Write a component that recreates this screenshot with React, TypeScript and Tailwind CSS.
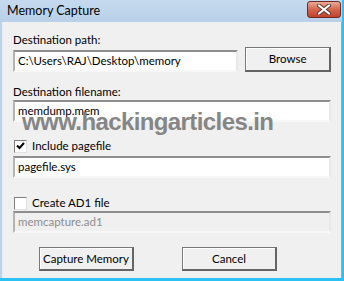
import * as React from "react";

function TextBox({ value, disabled = false, className = "" }: { value: string; disabled?: boolean; className?: string }) {
  return (
    <div
      className={`h-[22px] flex items-center pl-[3px] whitespace-nowrap border-2 border-t-[#8e8e8e] border-l-[#b4b4b4] border-b-[#f7f7f7] border-r-[#e8e8e8] ${
        disabled ? "bg-[#f0f0f0] text-[#8d8d8d]" : "bg-white text-black"
      } ${className}`}
    >
      {value}
    </div>
  );
}

function Button({ label, className = "" }: { label: string; className?: string }) {
  return (
    <div
      className={`h-[24px] flex items-center justify-center whitespace-nowrap bg-[#f0f0f0] border border-[#787878] border-r-2 border-b-2 border-r-[#646464] border-b-[#646464] shadow-[inset_1px_1px_0_#ffffff] text-black ${className}`}
    >
      {label}
    </div>
  );
}

function CheckBox({ checked, label }: { checked: boolean; label: string }) {
  return (
    <div className="h-[16px] flex items-center">
      <div className="ml-[1px] w-[13px] h-[13px] bg-white border border-t-[#7e7e7e] border-l-[#7e7e7e] border-b-[#e2e2e2] border-r-[#e2e2e2] flex items-center justify-center">
        {checked && (
          <svg width="9" height="8" viewBox="0 0 9 8">
            <path d="M1 3.5 L3.5 6 L8 1" fill="none" stroke="#000" strokeWidth="2" />
          </svg>
        )}
      </div>
      <span className="ml-[5px]">{label}</span>
    </div>
  );
}

export default function App() {
  return (
    <div className="relative w-[344px] h-[281px] flex flex-col bg-[#bdd3ea] border-r-2 border-b-[3px] border-[#2cc1f3] font-['Lato',sans-serif] text-[11.5px] leading-[16px] text-black">
      {/* title bar */}
      <div className="h-[22px] flex items-start bg-gradient-to-b from-[#c5daef] to-[#b9d0e8]">
        <span className="ml-[7px] mt-[3px] text-[12.5px]">Memory Capture</span>
        <div className="ml-auto mr-[1px] mt-[1px] w-[34px] h-[17px] rounded-[3px] border border-[#6e2b25] bg-gradient-to-b from-[#e9a896] via-[#d5654d] to-[#c2412b] flex items-center justify-center">
          <svg width="14" height="11" viewBox="0 0 14 11">
            <path d="M2 1.5 L12 9.5 M12 1.5 L2 9.5" stroke="#5d3a36" strokeWidth="4" strokeLinecap="round" />
            <path d="M2 1.5 L12 9.5 M12 1.5 L2 9.5" stroke="#ffffff" strokeWidth="2.2" strokeLinecap="round" />
          </svg>
        </div>
      </div>

      {/* body */}
      <div className="flex-1 ml-[2px] bg-[#f0f0f0] border-l border-[#e4ecf5] border-r border-r-[#a8a8a8] flex flex-col pl-[10px] pr-[10px]">
        <div className="mt-[10px] h-[15px] leading-[15px]">Destination path:</div>
        <div className="flex items-end gap-[7px] h-[25px]">
          <TextBox value="C:\Users\RAJ\Desktop\memory" className="w-[226px] bg-[#f0f0f0]" />
          <Button label="Browse" className="w-[86px] h-[25px]" />
        </div>

        <div className="mt-[12px]">Destination filename:</div>
        <TextBox value="memdump.mem" className="w-[318px]" />

        <div className="mt-[16px]">
          <CheckBox checked label="Include pagefile" />
        </div>
        <TextBox value="pagefile.sys" className="mt-[2px] w-[318px]" />

        <div className="mt-[17px]">
          <CheckBox checked={false} label="Create AD1 file" />
        </div>
        <TextBox value="memcapture.ad1" disabled className="w-[318px]" />

        <div className="mt-[14px] pl-[26px] flex gap-[48px]">
          <Button label="Capture Memory" className="w-[95px]" />
          <Button label="Cancel" className="w-[95px]" />
        </div>
      </div>

      {/* watermark */}
      <div className="absolute left-[22px] top-[110px] font-['Liberation_Sans',sans-serif] font-bold text-[24px] leading-none tracking-[-0.6px] text-[#7a7a7a] opacity-90 pointer-events-none whitespace-nowrap">
        www.hackingarticles.in
      </div>
    </div>
  );
}
